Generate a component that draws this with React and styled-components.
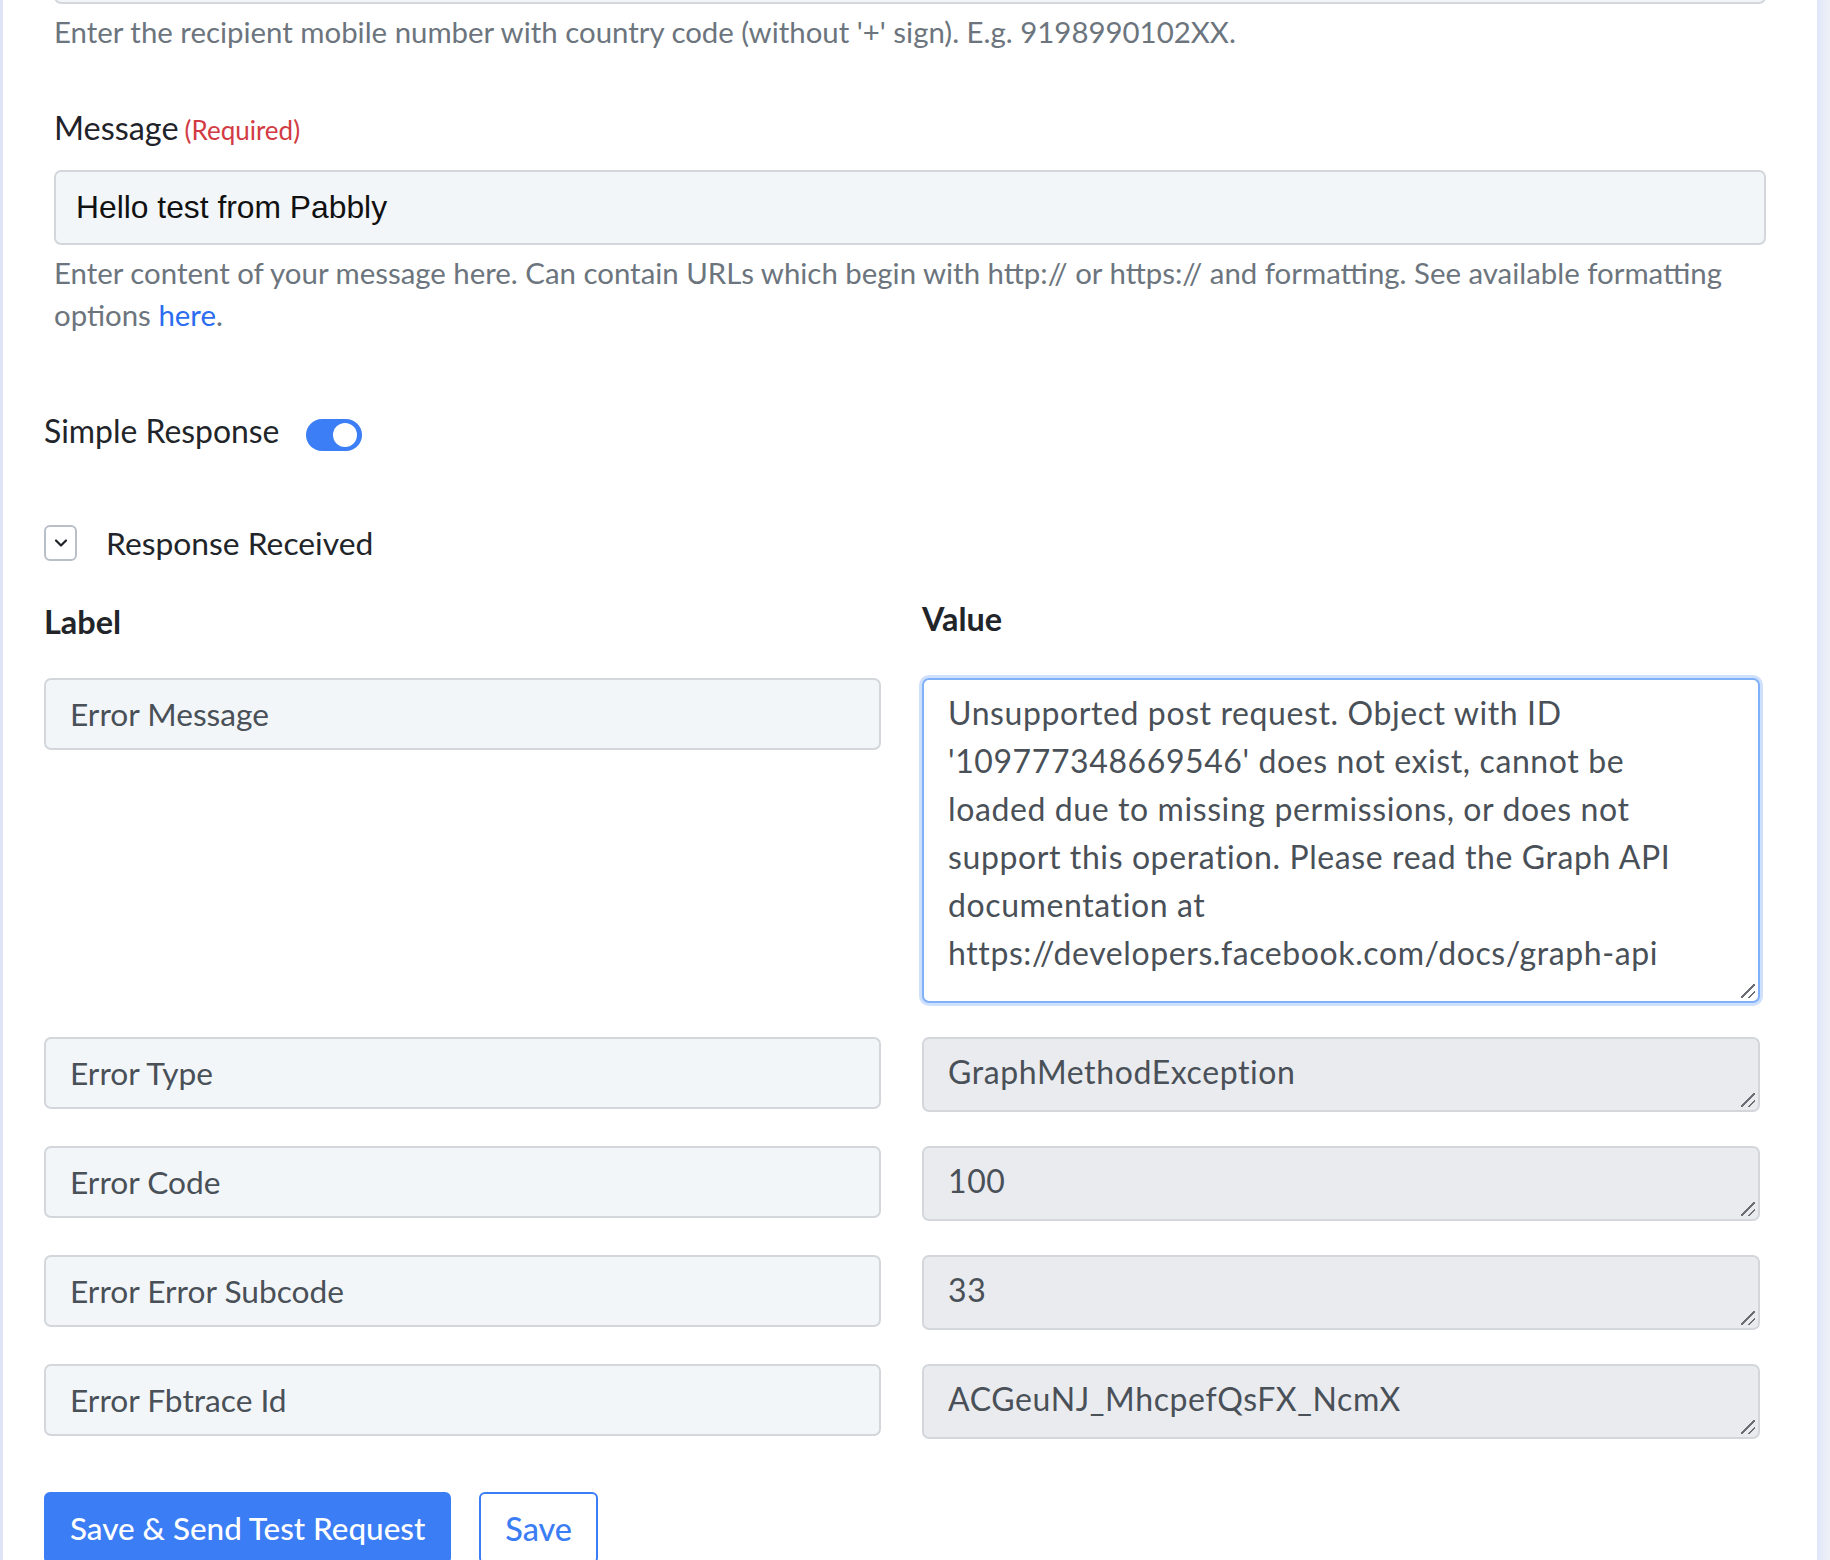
import React from "react";
import styled, { createGlobalStyle, css } from "styled-components";
import { ChevronDown } from "lucide-react";

const GlobalStyle = createGlobalStyle`
  html, body {
    margin: 0;
    padding: 0;
    background: #fff;
  }
  body {
    font-family: Lato, "Noto Sans", sans-serif;
    color: #212529;
  }
`;

const Page = styled.div`
  display: flex;
  width: 1830px;
  min-height: 1560px;
  overflow: hidden;
`;

const Main = styled.main`
  flex: 1;
  border-left: 3px solid #dfe5f7;
  padding-left: 41px;
`;

const SideBar = styled.div`
  width: 13px;
  background: linear-gradient(to right, #dfe6f8, #eef1f6);
`;

const Content = styled.div`
  width: 1722px;
`;

const Field = styled.div`
  padding-left: 10px;
`;

const TextInput = styled.div`
  box-sizing: border-box;
  height: 75px;
  display: flex;
  align-items: center;
  padding: 0 20px;
  background: #f3f6f9;
  border: 2px solid #d3d7dc;
  border-radius: 7px;
  font-family: "Liberation Sans", Arial, sans-serif;
  font-size: 31.8px;
  color: #111;
`;

const HiddenTop = styled(TextInput)`
  margin-top: -71px;
`;

const Help = styled.p`
  margin: 7px 0 0;
  font-size: 29.4px;
  line-height: 42px;
  color: #6c757d;

  a {
    color: #2b6cf0;
    text-decoration: none;
  }
`;

const FieldLabel = styled.div`
  margin: 55px 0 20px;
  font-size: 32.4px;
  line-height: 40px;
  color: #1f2329;

  span {
    font-size: 26px;
    color: #d23b43;
    margin-left: 6px;
  }
`;

const SwitchRow = styled.div`
  display: flex;
  align-items: flex-start;
  gap: 27px;
  margin-top: 79px;
  font-size: 31.9px;
  line-height: 32px;
  color: #212529;
`;

const Toggle = styled.div`
  position: relative;
  width: 56px;
  height: 32px;
  margin-top: 4px;
  border-radius: 16px;
  background: #3b7ef6;

  &::after {
    content: "";
    position: absolute;
    top: 4px;
    right: 5px;
    width: 24px;
    height: 24px;
    border-radius: 50%;
    background: #fff;
  }
`;

const Collapse = styled.div`
  display: flex;
  align-items: center;
  gap: 29px;
  margin-top: 73px;
  font-size: 31.8px;
  color: #212529;
`;

const ChevronBox = styled.div`
  box-sizing: border-box;
  width: 33px;
  height: 36px;
  display: flex;
  align-items: center;
  justify-content: center;
  border: 2px solid #b9bfc7;
  border-radius: 6px;
  color: #1f2329;
`;

const Grid = styled.div`
  display: grid;
  grid-template-columns: 837px 838px;
  column-gap: 41px;
  row-gap: 34px;
  align-items: start;
`;

const Heads = styled(Grid)`
  margin: 42px 0 38px;
`;

const Head = styled.div`
  font-size: 32.4px;
  font-weight: 700;
  line-height: 36px;
  color: #212529;
  margin-top: ${(p) => (p.$up ? "-3px" : "0")};
`;

const KeyInput = styled.input`
  box-sizing: border-box;
  width: 100%;
  height: 72px;
  padding: 0 24px;
  background: #f3f6f9;
  border: 2px solid #d3d7dc;
  border-radius: 7px;
  font-family: Lato, sans-serif;
  font-size: 31.7px;
  color: #495057;
  outline: none;
`;

const ValueBox = styled.div`
  position: relative;

  &::after {
    content: "";
    position: absolute;
    right: 5px;
    bottom: 5px;
    width: 14px;
    height: 14px;
    pointer-events: none;
    background: linear-gradient(
      135deg,
      transparent 46%,
      #6b6f75 46%,
      #6b6f75 54%,
      transparent 54%,
      transparent 72%,
      #6b6f75 72%,
      #6b6f75 80%,
      transparent 80%
    );
  }
`;

const ValueArea = styled.textarea`
  box-sizing: border-box;
  display: block;
  width: 100%;
  height: ${(p) => p.$h || 75}px;
  padding: 9px 24px;
  resize: none;
  background: #e9ebef;
  border: 2px solid #d3d7dc;
  border-radius: 7px;
  font-family: Lato, sans-serif;
  font-size: 32px;
  letter-spacing: 0.6px;
  line-height: 48px;
  color: #495057;
  outline: none;
  overflow: hidden;

  ${(p) =>
    p.$focused &&
    css`
      padding: 9px 24px;
      background: #fff;
      border-color: #80b1f8;
      box-shadow: 0 0 0 3px #cfe0fc;
    `}
`;

const Actions = styled.div`
  display: flex;
  gap: 28px;
  margin-top: 53px;
`;

const Button = styled.button`
  height: 72px;
  padding: 0 24px;
  border-radius: 6px;
  font-family: Lato, sans-serif;
  font-size: ${(p) => (p.$outline ? "32.4px" : "31.4px")};
  font-weight: 500;
  cursor: pointer;
  border: 2px solid #3b7df5;
  background: ${(p) => (p.$outline ? "#fff" : "#3b7df5")};
  color: ${(p) => (p.$outline ? "#3b7df5" : "#fff")};
`;

const rows = [
  {
    label: "Error Message",
    value:
      "Unsupported post request. Object with ID\n'109777348669546' does not exist, cannot be\nloaded due to missing permissions, or does not\nsupport this operation. Please read the Graph API\ndocumentation at\nhttps://developers.facebook.com/docs/graph-api",
    h: 325,
    focused: true,
  },
  { label: "Error Type", value: "GraphMethodException" },
  { label: "Error Code", value: "100" },
  { label: "Error Error Subcode", value: "33" },
  { label: "Error Fbtrace Id", value: "ACGeuNJ_MhcpefQsFX_NcmX" },
];

export default function App() {
  return (
    <Page>
      <GlobalStyle />
      <Main>
        <Content>
          <Field>
            <HiddenTop />
            <Help>
              Enter the recipient mobile number with country code (without '+'
              sign). E.g. 9198990102XX.
            </Help>

            <FieldLabel>
              Message<span>(Required)</span>
            </FieldLabel>
            <TextInput>Hello test from Pabbly</TextInput>
            <Help>
              Enter content of your message here. Can contain URLs which begin
              with http:// or https:// and formatting. See available formatting
              options <a href="#">here</a>.
            </Help>
          </Field>

          <SwitchRow>
            Simple Response
            <Toggle />
          </SwitchRow>

          <Collapse>
            <ChevronBox>
              <ChevronDown size={20} strokeWidth={2.6} />
            </ChevronBox>
            Response Received
          </Collapse>

          <Heads>
            <Head>Label</Head>
            <Head $up>Value</Head>
          </Heads>

          <Grid>
            {rows.map((r) => (
              <React.Fragment key={r.label}>
                <KeyInput readOnly value={r.label} />
                <ValueBox>
                  <ValueArea
                    readOnly
                    value={r.value}
                    $h={r.h}
                    $focused={r.focused}
                  />
                </ValueBox>
              </React.Fragment>
            ))}
          </Grid>

          <Actions>
            <Button>Save &amp; Send Test Request</Button>
            <Button $outline>Save</Button>
          </Actions>
        </Content>
      </Main>
      <SideBar />
    </Page>
  );
}
